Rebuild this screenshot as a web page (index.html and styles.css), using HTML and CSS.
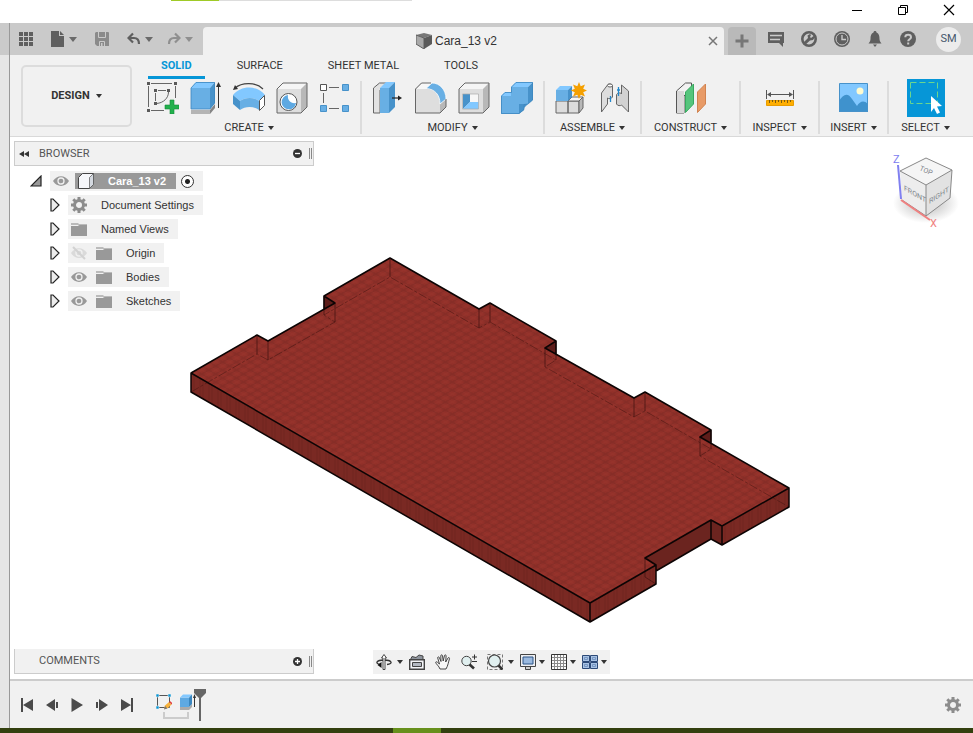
FILE: index.html
```html
<!DOCTYPE html>
<html lang="en">
<head>
	<meta charset="utf-8">
	<meta name="viewport" content="width=device-width, initial-scale=1">
	<title>Cara_13 v2</title>
	<link rel="stylesheet" href="styles.css">
</head>

<body>
	<header class="titlebar">
		<div class="progress"><span class="progress-done"></span></div>
		<button class="win-btn" aria-label="Minimize"><svg width="12" height="12" viewBox="0 0 12 12"><path d="M1 6.5h10" stroke="#000"/></svg></button>
		<button class="win-btn" aria-label="Restore"><svg width="12" height="12" viewBox="0 0 12 12" fill="none" stroke="#000"><path d="M1.5 3.5h7v7h-7zM3.5 3.500v-2h7v7h-2"/></svg></button>
		<button class="win-btn" aria-label="Close"><svg width="12" height="12" viewBox="0 0 12 12"><path d="M1 1l10 10M11 1l-10 10" stroke="#000" stroke-width="1.200"/></svg></button>
	</header>

	<div class="app">
		<div class="edge"></div>
		<main class="main">

			<!-- quick access + document tab -->
			<div class="docbar">
				<div class="quick">
					<button aria-label="Data panel"><svg width="14" height="14" viewBox="0 0 14 14" fill="#5f5f5f"><path d="M0 0h4v4H0zM5 0h4v4H5zM10 0h4v4h-4zM0 5h4v4H0zM5 5h4v4H5zM10 5h4v4h-4zM0 10h4v4H0zM5 10h4v4H5zM10 10h4v4h-4z"/></svg></button>
					<button aria-label="File"><svg width="14" height="16" viewBox="0 0 14 16" fill="#5f5f5f"><path d="M0 0h8v5h5v11H0zM9 0l4 4H9z"/></svg><i class="caret dim"></i></button>
					<button aria-label="Save"><svg width="14" height="14" viewBox="0 0 14 14"><path d="M1 0h12a1 1 0 011 1v13H2L0 12V1z" fill="#8a8a8a"/><path d="M3.500 0v5.500h7V0M4.500 14V9.500h5V14" fill="none" stroke="#cacaca"/><path d="M6 11h1.500v3H6z" fill="#cacaca"/></svg></button>
					<div class="history">
						<button aria-label="Undo"><svg width="14" height="14" viewBox="0 0 14 14" fill="none" stroke="#5f5f5f" stroke-width="2.200"><path d="M6 1.500L1.500 6 6 10.500M2 6h5c3.500 0 5 2 5 6"/></svg><i class="caret dim"></i></button>
						<button aria-label="Redo"><svg width="14" height="14" viewBox="0 0 14 14" fill="none" stroke="#8f8f8f" stroke-width="2.200"><path d="M8 1.500L12.500 6 8 10.500M12 6H7c-3.500 0-5 2-5 6"/></svg><i class="caret faint"></i></button>
					</div>
				</div>
				<div class="doctab">
					<span class="doctab-name"><svg width="16" height="16" viewBox="0 0 16 16"><path d="M0 2l8-2 8 2-8 3z" fill="#777"/><path d="M0 2l8 3v11l-8-5z" fill="#a9a9a9" stroke="#5f5f5f"/><path d="M8 5l8-3v9l-8 5z" fill="#5a5a5a"/></svg>Cara_13 v2</span>
					<button aria-label="Close tab"><svg width="10" height="10" viewBox="0 0 10 10"><path d="M1 1l8 8M9 1L1 9" stroke="#777" stroke-width="1.500"/></svg></button>
				</div>
				<button class="newtab" aria-label="New tab"><svg width="14" height="14" viewBox="0 0 14 14"><path d="M7 .5v13M.5 7h13" stroke="#777" stroke-width="3"/></svg></button>
				<div class="account">
					<button aria-label="Feedback"><svg width="16" height="16" viewBox="0 0 16 16"><path d="M0 1h16v11h-1v4l-4-4H0z" fill="#5f5f5f"/><path d="M2 4.500h12M2 8.500h10" stroke="#cacaca" stroke-width="1.300"/></svg></button>
					<button aria-label="Extensions"><svg width="16" height="16" viewBox="0 0 16 16"><circle cx="8" cy="8" r="6.700" fill="none" stroke="#5f5f5f" stroke-width="2.600"/><path d="M2 12l5-5-.5-2.500L9 3l1 1-1 2 1 1 2.500-2L14 6l-2 3-3 .5L4 14z" fill="#5f5f5f"/></svg></button>
					<button aria-label="Job status"><svg width="16" height="16" viewBox="0 0 16 16"><circle cx="8" cy="8" r="8" fill="#5f5f5f"/><circle cx="8" cy="8" r="6" fill="none" stroke="#cacaca"/><path d="M8 4v4.500h4" fill="none" stroke="#cacaca" stroke-width="1.400"/></svg></button>
					<button aria-label="Notifications"><svg width="16" height="16" viewBox="0 0 16 16" fill="#5f5f5f"><path d="M8 0c1 0 1.500.7 1.500 1.500C12 2.500 12.500 5 12.500 8c0 2 1 3 2 4.500h-13c1-1.500 2-2.500 2-4.500 0-3 .5-5.500 3-6.500C6.500.7 7 0 8 0zM6 13.500h4L8 16z"/></svg></button>
					<button aria-label="Help"><svg width="16" height="16" viewBox="0 0 16 16"><circle cx="8" cy="8" r="8" fill="#5f5f5f"/><path d="M5.300 6.300C5.300 3 11 3 11 6.300c0 2-2.800 2-2.800 4" fill="none" stroke="#cacaca" stroke-width="2"/><path d="M7.200 11.500h2v2h-2z" fill="#cacaca"/></svg></button>
					<button class="avatar">SM</button>
				</div>
			</div>

			<!-- ribbon -->
			<div class="ribbon">
				<button class="workspace">DESIGN<i class="caret"></i></button>
				<div class="ribbon-body">
					<nav class="tabs">
						<a href="#solid" class="tab active">SOLID</a>
						<a href="#surface" class="tab">SURFACE</a>
						<a href="#sheet" class="tab">SHEET METAL</a>
						<a href="#tools" class="tab">TOOLS</a>
					</nav>
					<div class="groups">
						<section class="group create">
							<div class="tools">
								<button aria-label="Create sketch"><svg width="32" height="32" viewBox="0 0 32 32"><path d="M4 1.500h21M1.500 4v21M28.500 4v12M4 28.500h13M11 8.500h8M8.500 11v8" stroke="#666"/><path d="M21.500 10c0 6-5 11-12 11.500" fill="none" stroke="#666"/><path d="M0 0h3v3H0zM27 0h3v3h-3zM0 27h3v3H0zM7 7h3v3H7zM20 7h3v3h-3zM7 20h3v3H7z" fill="#5a5a5a"/><path d="M23 18h4v5h5v4h-5v5h-4v-5h-5v-4h5z" fill="#22b14c" stroke="#168c39" stroke-width=".6"/></svg></button>
								<button aria-label="Extrude"><svg width="32" height="32" viewBox="0 0 32 32"><path d="M1 28h19v4H1z" fill="#b5b5b5"/><path d="M20 28l5-6v4l-5 6z" fill="#858585"/><path d="M1 6h19v21H1z" fill="#68afe4"/><path d="M1 6l5-6h19l-5 6z" fill="#82c8ff"/><path d="M20 6l5-6v21l-5 6z" fill="#4792ca"/><path d="M1 27V6l5-5.500h18.500V21L20 27z" fill="none" stroke="#3c87bf" stroke-width=".8"/><path d="M28.500 4v22" stroke="#333"/><path d="M28.500 0l2.500 5h-5z" fill="#333"/></svg></button>
								<button aria-label="Revolve"><svg width="32" height="32" viewBox="0 0 32 32"><path d="M2 6c7-6 21-6 28 1" fill="none" stroke="#444" stroke-width="1.200"/><path d="M0 8l2-5 3 4z" fill="#333"/><path d="M0 13c8-10 24-10 32 0l-6 6c-5-4-14-4-19 0z" fill="#82c8ff"/><path d="M0 13l7 6v9l-7-6z" fill="#4792ca"/><path d="M7 19c5-4 14-4 19 0v9c-5-4-14-4-19 0z" fill="#68afe4"/><path d="M26.500 18.500l5-5v10l-5 5z" fill="#fff" stroke="#555"/></svg></button>
								<button aria-label="Hole"><svg width="32" height="32" viewBox="0 0 32 32"><path d="M1 7h24v24H1z" fill="#dedede"/><path d="M1 7l6-6h24l-6 6z" fill="#f5f5f5"/><path d="M25 7l6-6v24l-6 6z" fill="#b8b8b8"/><path d="M1 31V7l6-6h24v24l-6 6z" fill="none" stroke="#666"/><circle cx="12.500" cy="20" r="8.500" fill="#fff" stroke="#555"/><path d="M12 13a7.200 7.200 0 108 8c-5 1-9-3-8-8z" fill="#5ea9e2"/></svg></button>
								<button aria-label="Rectangular pattern"><svg width="32" height="32" viewBox="0 0 32 32"><path d="M10 5.500h10M4.500 11v10M10 26.500h10" stroke="#666"/><path d="M1.500 2.500h6v6h-6z" fill="#fff" stroke="#555"/><path d="M23.500 2.500h6v6h-6zM1.500 23.500h6v6h-6zM23.500 23.500h6v6h-6z" fill="#68afe4" stroke="#4792ca"/></svg></button>
							</div>
							<button class="group-label">CREATE<i class="caret"></i></button>
						</section>
						<section class="group modify">
							<div class="tools">
								<button aria-label="Press pull"><svg width="32" height="32" viewBox="0 0 32 32"><path d="M1.500 31V6l6-5H15L8 8v23z" fill="#e2e2e2" stroke="#666"/><path d="M8 6h9v25H8z" fill="#68afe4"/><path d="M8 6l6-6h9l-6 6z" fill="#82c8ff"/><path d="M17 6l6-6v25l-6 6z" fill="#4792ca"/><path d="M20 16h7" stroke="#222" stroke-width="1.200"/><path d="M30 16l-4-2.500v5z" fill="#222"/></svg></button>
								<button aria-label="Fillet"><svg width="32" height="32" viewBox="0 0 32 32"><path d="M.5 31V7l6-6H16c9 0 15 7 15 16v8l-6 6z" fill="#b8b8b8"/><path d="M.5 31V7H10c9 0 15 5 15 14v10z" fill="#dedede"/><path d="M1 7l6-6h10l-6 6z" fill="#f7f7f7"/><path d="M11 6.500L17 1c8 0 14 7 14 16l-6 5c0-9-5-15-14-15.500z" fill="#68afe4" stroke="#fff" stroke-width=".8"/><path d="M16 1H6.500l-6 6v24H25l6-6v-8" fill="none" stroke="#666"/></svg></button>
								<button aria-label="Shell"><svg width="32" height="32" viewBox="0 0 32 32"><path d="M1 7h24v24H1z" fill="#dedede"/><path d="M1 7l6-6h24l-6 6z" fill="#f5f5f5"/><path d="M25 7l6-6v24l-6 6z" fill="#b8b8b8"/><path d="M1 31V7l6-6h24v24l-6 6z" fill="none" stroke="#666"/><path d="M4.500 12h16v15h-16z" fill="#f7f7f7"/><path d="M5 12h7v8l-7 7z" fill="#4792ca"/><path d="M12 20h8.500v7H5z" fill="#82c8ff"/><path d="M4.500 12h16v15h-16z" fill="none" stroke="#aaa" stroke-width=".7"/></svg></button>
								<button aria-label="Combine"><svg width="32" height="32" viewBox="0 0 32 32"><path d="M0 14h10V5h17v17h-9v10H0z" fill="#68afe4"/><path d="M0 14l4-4h6v4zM10 5l5-5h17l-5 5z" fill="#82c8ff"/><path d="M27 5l5-5v18l-5 4zM18 22h9l-4 4v2l-5 4z" fill="#4792ca"/><path d="M.5 31.500V14L4 10.500h6.500V5l4.500-4.500h16.500V18L27 22l-4 .5v5l-5 4z" fill="none" stroke="#3c87bf" stroke-width=".8"/></svg></button>
							</div>
							<button class="group-label">MODIFY<i class="caret"></i></button>
						</section>
						<section class="group assemble">
							<div class="tools">
								<button aria-label="New component"><svg width="32" height="32" viewBox="0 0 32 32"><path d="M1 19h12v12H1zM13 19h11v12H13z" fill="#ddd" stroke="#666"/><path d="M13 19l4-4h11l-4 4z" fill="#f7f7f7" stroke="#666"/><path d="M24 19l4-4v11l-4 5z" fill="#b8b8b8" stroke="#666"/><path d="M1 8h12v11H1z" fill="#68afe4"/><path d="M1 8l4-4h12l-4 4z" fill="#82c8ff"/><path d="M13 8l4-4v11l-4 4z" fill="#4792ca"/><path d="M24 0l1.700 4.300L30 2.500l-1.800 4.200 4 1.800-4 1.800 1.800 4.200-4.300-1.800L24 17l-1.700-4.300-4.300 1.800 1.800-4.200-4-1.800 4-1.800L18 2.500l4.300 1.800z" fill="#f5a000"/></svg></button>
								<button aria-label="Joint"><svg width="32" height="32" viewBox="0 0 32 32" stroke="#666"><path d="M3.500 30V11l6-8c1-2 5-1 5 1v11c-1 2-4 2-5 1v6z" fill="#ddd"/><path d="M30.500 30V9l-7-6v9c-1-2-5-1-5 1v9c1 2 4 2 5 1z" fill="#d2d2d2"/><ellipse cx="12" cy="3.500" rx="2.500" ry="1.500" fill="#fff"/><path d="M12.500 14v6M20.500 5v9M19 8h3" stroke="#2288cc" stroke-width="1.300"/></svg></button>
							</div>
							<button class="group-label">ASSEMBLE<i class="caret"></i></button>
						</section>
						<section class="group construct">
							<div class="tools">
								<button aria-label="Offset plane"><svg width="32" height="32" viewBox="0 0 32 32"><path d="M1.500 31V9l9-8h6v5L9 14v17z" fill="#f2f2f2" stroke="#555"/><path d="M2 9h7v22H2z" fill="#d8d8d8"/><path d="M10.500 10L18.500 2v20l-8 8.500z" fill="#55c57c" stroke="#37a95f"/><path d="M22.500 10L30.500 2v20l-8 8.500z" fill="#e89b67" stroke="#d18350"/></svg></button>
							</div>
							<button class="group-label">CONSTRUCT<i class="caret"></i></button>
						</section>
						<section class="group inspect">
							<div class="tools">
								<button aria-label="Measure"><svg width="32" height="32" viewBox="0 0 32 32"><path d="M2.500 8v9M29.500 8v9M4 12.500h24" stroke="#555"/><path d="M3 12.500l4-2.500v5zM29 12.500l-4-2.500v5z" fill="#555"/><path d="M2.500 18.500h27v5h-27z" fill="#ffae00" stroke="#e89c00"/><path d="M5.500 18v3M8.500 18v2M11.500 18v3M14.500 18v2M17.500 18v3M20.500 18v2M23.500 18v3M26.500 18v2" stroke="#7a5a10"/></svg></button>
							</div>
							<button class="group-label">INSPECT<i class="caret"></i></button>
						</section>
						<section class="group insert">
							<div class="tools">
								<button aria-label="Insert image"><svg width="32" height="32" viewBox="0 0 32 32"><path d="M1.500 1.500h28v28h-28z" fill="#82c8ff"/><path d="M1 19c4-7 9-9 13-2l5 7c3-5 7-6 11-2v8H1z" fill="#3f92cd"/><path d="M1.500 1.500h28v28h-28z" fill="none" stroke="#4792ca"/><circle cx="22" cy="9" r="3.500" fill="#fffbd0"/></svg></button>
							</div>
							<button class="group-label">INSERT<i class="caret"></i></button>
						</section>
						<section class="group select">
							<div class="tools">
								<button aria-label="Select"><svg width="38" height="38" viewBox="0 0 38 38"><path d="M0 0h38v38H0z" fill="#0696d7"/><path d="M3.500 3.500h27v21h-27z" fill="none" stroke="#6cd68d" stroke-dasharray="6 3"/><path d="M24 17l11 10-5 .5 3 6-3 1.500-3-6-3 4z" fill="#fff"/></svg></button>
							</div>
							<button class="group-label">SELECT<i class="caret"></i></button>
						</section>
					</div>
				</div>
			</div>

			<!-- modelling canvas -->
			<div class="canvas">
				<svg class="model" viewBox="10 137 963 542" role="img" aria-label="Cara_13 body">
					<defs>
						<pattern id="weave" width="8" height="8" patternUnits="userSpaceOnUse" patternTransform="matrix(.87 .5 -.87 .5 0 0)">
							<rect width="8" height="8" fill="#923029"/>
							<path d="M0 2h8M2 0v8" stroke="#7a2a23" stroke-width="2" opacity=".45"/>
							<path d="M0 6h8M6 0v8" stroke="#a0382f" opacity=".4"/>
						</pattern>
						<pattern id="rib" width="9" height="9" patternUnits="userSpaceOnUse">
							<rect width="9" height="9" fill="#7a2923"/>
							<path d="M2 0v9M5 0v9" stroke="#662019" opacity=".5"/>
						</pattern>
					</defs>
					<!-- side walls -->
					<path d="M191 373L590 603V622L191 392z" fill="url(#rib)"/>
					<path d="M590 603L656 565V584L590 622zM722 526L789 488V507L722 545z" fill="url(#rib)"/>
					<path d="M645 558L711 520V539L656 571V565zM711 520L722 526V545L711 539z" fill="#6b241f"/>
					<path d="M324 296L335 303 324 310zM556 341V354L545 348zM711 430V443L700 437z" fill="#5e1d1a"/>
					<!-- top face -->
					<path d="M191 373L257 335 268 341 335 303 324 296 390 258 479 309 490 303 556 341 545 348 634 398 645 392 711 430 700 437 789 488 722 526 711 520 645 558 656 565 590 603z" fill="url(#weave)"/>
					<!-- hidden edges -->
					<path d="M191 392L257 354 268 360 335 322 324 315 390 277 479 328 490 322 556 360 545 367 634 417 645 411 711 449 700 456 789 507" fill="none" stroke="#481512" stroke-width=".8" stroke-dasharray="9 2 3 2" opacity=".7"/>
					<path d="M257 335v19M268 341v19M335 303v19M324 296v19M390 258v19M479 309v19M490 303v19M556 341v19M545 348v19M634 398v19M645 392v19M711 430v19M700 437v19M645 558v19l11 7" fill="none" stroke="#481512" stroke-width=".8"/>
					<!-- visible edges -->
					<path d="M191 373L257 335 268 341 335 303 324 296 390 258 479 309 490 303 556 341 545 348 634 398 645 392 711 430 700 437 789 488 722 526 711 520 645 558 656 565 590 603zM191 373V392L590 622 656 584V565M590 603V622M656 571L711 539 722 545 789 507V488M722 526V545M711 520V539M324 296V310M556 341V354M711 430V443" fill="none" stroke="#0c0404" stroke-width="1.500" stroke-linejoin="round"/>
				</svg>

				<svg class="viewcube" width="80" height="90" viewBox="885 145 80 90" role="img" aria-label="View cube">
					<defs>
						<radialGradient id="shade"><stop offset=".3" stop-color="#999" stop-opacity=".5"/><stop offset="1" stop-color="#999" stop-opacity="0"/></radialGradient>
					</defs>
					<ellipse cx="926" cy="203" rx="33" ry="20" fill="url(#shade)"/>
					<path d="M900 171L926 158 952 170 926 185z" fill="#f5f5f5"/>
					<path d="M900 171L926 185V216L902 200z" fill="#ededed"/>
					<path d="M926 185L952 170 950 198 926 216z" fill="#e2e2e2"/>
					<path d="M900 171L926 158 952 170 926 185zM926 185V216M902 200L926 216 950 198 952 170" fill="none" stroke="#888"/>
					<path d="M898 165L901 199" stroke="#8080f0" stroke-width="2"/>
					<path d="M901 200L930 220" stroke="#f08080" stroke-width="2"/>
					<text class="axis" x="893" y="163" fill="#8080f0">Z</text>
					<text class="axis" x="930" y="227" fill="#f08080">X</text>
					<text class="face" transform="translate(919 170) rotate(24)">TOP</text>
					<text class="face" transform="translate(904 190) skewY(30)">FRONT</text>
					<text class="face" transform="translate(929 204) skewY(-33)">RIGHT</text>
				</svg>

				<div class="browser">
					<div class="panel">
						<button aria-label="Collapse"><svg width="10" height="6" viewBox="0 0 10 6" fill="#333"><path d="M5 0v6L0 3zM10 0v6L5 3z"/></svg></button>
						<span class="panel-title">BROWSER</span>
						<button aria-label="Hide all"><svg width="9" height="9" viewBox="0 0 9 9"><circle cx="4.500" cy="4.500" r="4.500" fill="#333"/><path d="M2 4.500h5" stroke="#fff" stroke-width="1.300"/></svg></button>
						<i class="grip"></i>
					</div>
					<ul class="tree">
						<li class="root">
							<button aria-label="Collapse Cara_13 v2"><svg width="12" height="12" viewBox="0 0 12 12"><path d="M11 1v10H1z" fill="#999" stroke="#222" stroke-width="1.200"/></svg></button>
							<div class="node">
								<svg class="icon" width="16" height="16" viewBox="0 0 16 16"><use href="#eye"/></svg>
								<span class="node-name"><svg width="16" height="16" viewBox="0 0 16 16"><path d="M.5 15.500v-11l4-4h11v11l-4 4z" fill="#f6f7fa" stroke="#444"/><path d="M11.500 4.500l4-4v11l-4 4z" fill="#d4d9e0" stroke="#555" stroke-width=".7"/></svg>Cara_13 v2</span>
								<input type="radio" class="activate" aria-label="Activate Cara_13 v2" checked>
							</div>
						</li>
						<li>
							<button aria-label="Expand Document Settings"><svg width="10" height="14" viewBox="0 0 10 14"><use href="#expand"/></svg></button>
							<div class="node"><svg class="icon" width="16" height="16" viewBox="0 0 16 16"><use href="#gear"/></svg><span>Document Settings</span></div>
						</li>
						<li>
							<button aria-label="Expand Named Views"><svg width="10" height="14" viewBox="0 0 10 14"><use href="#expand"/></svg></button>
							<div class="node"><svg class="icon" width="16" height="16" viewBox="0 0 16 16"><use href="#folder"/></svg><span>Named Views</span></div>
						</li>
						<li>
							<button aria-label="Expand Origin"><svg width="10" height="14" viewBox="0 0 10 14"><use href="#expand"/></svg></button>
							<div class="node"><svg class="icon" width="16" height="16" viewBox="0 0 16 16" opacity=".25"><use href="#eye"/><path d="M2 2l12 12" stroke="#777" stroke-width="2"/></svg><svg class="icon" width="16" height="16" viewBox="0 0 16 16"><use href="#folder"/></svg><span>Origin</span></div>
						</li>
						<li>
							<button aria-label="Expand Bodies"><svg width="10" height="14" viewBox="0 0 10 14"><use href="#expand"/></svg></button>
							<div class="node"><svg class="icon" width="16" height="16" viewBox="0 0 16 16"><use href="#eye"/></svg><svg class="icon" width="16" height="16" viewBox="0 0 16 16"><use href="#folder"/></svg><span>Bodies</span></div>
						</li>
						<li>
							<button aria-label="Expand Sketches"><svg width="10" height="14" viewBox="0 0 10 14"><use href="#expand"/></svg></button>
							<div class="node"><svg class="icon" width="16" height="16" viewBox="0 0 16 16"><use href="#eye"/></svg><svg class="icon" width="16" height="16" viewBox="0 0 16 16"><use href="#folder"/></svg><span>Sketches</span></div>
						</li>
					</ul>
				</div>

				<div class="canvas-foot">
					<div class="panel comments">
						<span class="panel-title">COMMENTS</span>
						<button aria-label="Add comment"><svg width="9" height="9" viewBox="0 0 9 9"><circle cx="4.500" cy="4.500" r="4.500" fill="#333"/><path d="M2 4.500h5M4.500 2v5" stroke="#fff" stroke-width="1.300"/></svg></button>
						<i class="grip"></i>
					</div>
					<div class="navbar">
						<button class="wide" aria-label="Orbit"><svg width="16" height="16" viewBox="0 0 16 16" fill="none" stroke="#333"><path d="M4 10.500C-1 9.500 0 6 8 6s9.500 4 3 4.500" stroke-width="1.300"/><path d="M7 15.500V4H5.500L8 .5 10.500 4H9v11.500z" fill="#fff" stroke-width=".9"/><path d="M1.500 11l4-3v6z" fill="#111" stroke="none"/></svg><i class="caret"></i></button>
						<button class="single" aria-label="Look at"><svg width="16" height="16" viewBox="0 0 16 16" fill="#f4f5f8" stroke="#444"><path d="M1.500 5.500L3 2.500l4 1 3-2.500 4 1v3.500" fill="#8d939c"/><path d="M.7 5.700h14.600v9.600H.7z" stroke-width="1.400"/><path d="M3.500 8.500h9v4h-9z" fill="#b4b9c2"/></svg></button>
						<button class="single" aria-label="Pan"><svg width="16" height="16" viewBox="0 0 16 16"><path d="M5 15C4 12 1 10 .7 8.500c0-1 1.300-1 2 0L4.500 10 2.700 4c-.3-1.200 1.200-1.600 1.600-.5L6 7.500 5.800 1.800c0-1.300 1.600-1.300 1.700 0L8.200 7 9.500 1.500c.3-1 1.700-.8 1.600.4L10.700 8l2.300-4c.6-1 1.900-.3 1.500.7-1 3-1.500 7-3.500 10.300z" fill="#f7f7f7" stroke="#333" stroke-width=".9"/></svg></button>
						<button class="single" aria-label="Zoom"><svg width="16" height="16" viewBox="0 0 16 16"><path d="M8 10l5 4.500" stroke="#333" stroke-width="2.600"/><circle cx="5.500" cy="7" r="4.700" fill="#e0efef" stroke="#444"/><path d="M11 3h5M13.500 .5v5M11 7.500h5" stroke="#333"/></svg></button>
						<button class="wide" aria-label="Zoom window"><svg width="16" height="16" viewBox="0 0 16 16"><path d="M.5.5h15v15H.5z" fill="none" stroke="#777" stroke-dasharray="3 2"/><path d="M11 11l4.500 4.500" stroke="#333" stroke-width="2.600"/><circle cx="7.500" cy="7" r="6" fill="#e0efef" stroke="#444" stroke-width="1.200"/></svg><i class="caret"></i></button>
						<button aria-label="Display settings"><svg width="16" height="16" viewBox="0 0 16 16"><path d="M5.500 12.500h5v3h-5z" fill="#ccc" stroke="#444"/><path d="M.5.500h15v12H.5z" fill="#eceef2" stroke="#444"/><path d="M3 3h10v7H3z" fill="#9ab9df" stroke="#2c5487"/></svg><i class="caret"></i></button>
						<button aria-label="Grid and snaps"><svg width="16" height="16" viewBox="0 0 16 16"><path d="M.5.5h15v15H.5z" fill="#fafafa" stroke="#333"/><path d="M3.500 1v14M6.500 1v14M9.500 1v14M12.500 1v14M1 3.500h14M1 6.500h14M1 9.500h14M1 12.500h14" stroke="#888"/></svg><i class="caret"></i></button>
						<button aria-label="Viewports"><svg width="16" height="16" viewBox="0 0 16 16"><path d="M.5 1.500h7v6h-7zM8.500 1.500h7v6h-7zM.5 8.500h7v6h-7zM8.500 8.500h7v6h-7z" fill="#a9c3e4" stroke="#2d4a78"/><path d="M2.500 3.500h3v2h-3zM10.500 3.500h3v2h-3zM2.500 10.500h3v2h-3zM10.500 10.500h3v2h-3z" fill="#a9c3e4" stroke="#6284b5" stroke-width=".7"/></svg><i class="caret"></i></button>
					</div>
				</div>
			</div>

			<!-- timeline -->
			<footer class="timeline">
				<div class="playback">
					<button aria-label="To start"><svg width="14" height="14" viewBox="0 0 14 14" fill="#4a4a4a"><path d="M1 0h2v14H1zM13 1v12L3 7z"/></svg></button>
					<button aria-label="Step back"><svg width="14" height="14" viewBox="0 0 14 14" fill="#4a4a4a"><path d="M10 1v12L1 7zM11 4h2v6h-2z"/></svg></button>
					<button aria-label="Play"><svg width="14" height="14" viewBox="0 0 14 14" fill="#4a4a4a"><path d="M1.500 0v14L13 7z"/></svg></button>
					<button aria-label="Step forward"><svg width="14" height="14" viewBox="0 0 14 14" fill="#4a4a4a"><path d="M4 1v12l9-6zM1 4h2v6H1z"/></svg></button>
					<button aria-label="To end"><svg width="14" height="14" viewBox="0 0 14 14" fill="#4a4a4a"><path d="M11 0h2v14h-2zM1 1v12l10-6z"/></svg></button>
				</div>
				<div class="features">
					<button aria-label="Sketch1"><svg width="16" height="16" viewBox="0 0 16 16"><path d="M1.500 1.500h12v12h-12z" fill="none" stroke="#555"/><path d="M0 0h3v3H0zM12 0h3v3h-3zM0 12h3v3H0z" fill="#0696d7" stroke="#f1f1f1" stroke-width=".6"/><path d="M8 15l1-3.500L13 8l2.500 2.500L12 14z" fill="#f7b23c"/><path d="M13 8l1-1 3 2.500-1.500 1z" fill="#e04040"/><path d="M8 15.500l1-3.500 2.500 2.500z" fill="#777"/></svg></button>
					<button aria-label="Extrude1"><svg width="16" height="16" viewBox="0 0 16 16"><path d="M0 13h9l3-3v3l-3 3H0z" fill="#aaa"/><path d="M0 3.500h9V13H0z" fill="#5ea9e2"/><path d="M0 3.500L3 .5h9l-3 3z" fill="#82c8ff"/><path d="M9 3.500l3-3V10l-3 3z" fill="#3a86bf"/><path d="M14.500 3v10" stroke="#333"/><path d="M14.500 0l1.500 4h-3z" fill="#333"/></svg></button>
					<i class="bracket"></i>
				</div>
				<svg class="marker" width="12" height="32" viewBox="0 0 12 32" fill="#666"><path d="M0 0h12v4L7 9v23H5V9L0 4z"/></svg>
				<button class="settings" aria-label="Timeline settings"><svg width="16" height="16" viewBox="0 0 16 16"><use href="#gear"/></svg></button>
			</footer>
		</main>
	</div>
	<div class="taskbar"><span class="taskbar-item"></span></div>

	<!-- shared symbols -->
	<svg class="symbols" width="0" height="0">
		<symbol id="eye" viewBox="0 0 16 16"><path d="M0 8c4-6.500 12-6.500 16 0-4 6.500-12 6.500-16 0z" fill="#999"/><circle cx="8" cy="8" r="3" fill="#999" stroke="#f1f1f1" stroke-width="1.300"/></symbol>
		<symbol id="folder" viewBox="0 0 16 16"><path d="M0 2h7l1 1h8v2H8L7 4H0z" fill="#bbb"/><path d="M0 5h7l2-1h7v11H0z" fill="#999"/></symbol>
		<symbol id="gear" viewBox="0 0 16 16"><circle cx="8" cy="8" r="4.500" fill="none" stroke="#8c8c8c" stroke-width="3"/><path d="M8 0v3M8 13v3M0 8h3M13 8h3M2.300 2.300l2.200 2.200M11.500 11.500l2.200 2.200M2.300 13.700l2.200-2.200M11.500 4.500l2.200-2.200" stroke="#8c8c8c" stroke-width="3"/></symbol>
		<symbol id="expand" viewBox="0 0 10 14"><path d="M1 1h2l6 6-6 6H1z" fill="#ececec" stroke="#222" stroke-width="1.200"/></symbol>
	</svg>
</body>
</html>
```
FILE: styles.css
```css
* {
	box-sizing: border-box;}
body {
	margin: 0;
	height: 100vh;
	display: flex;
	flex-direction: column;
	overflow: hidden;
	background: #fff;
	color: #333;
	font-family: Roboto, "Liberation Sans", sans-serif;
	font-size: 11px;
	line-height: 14px;}
button {
	display: flex;
	align-items: center;
	justify-content: center;
	padding: 0;
	border: 0;
	background: none;
	color: inherit;
	font: inherit;
	cursor: pointer;}
svg {
	display: block;
	flex: none;}
.symbols {
	position: absolute;}
.caret {
	flex: none;
	border: solid transparent;
	border-width: 4px 3px 0;
	border-top-color: #333;}
.caret.dim {
	border-width: 5px 4px 0;
	border-top-color: #6a6a6a;
	margin-left: 4px;}
.caret.faint {
	border-width: 5px 4px 0;
	border-top-color: #8f8f8f;
	margin-left: 4px;}

/* window title strip */
.titlebar {
	flex: none;
	height: 23px;
	display: flex;
	justify-content: flex-end;
	gap: 34px;
	padding: 0 18px 3px 171px;}
.progress {
	width: 241px;
	height: 1px;
	margin-right: auto;
	background: #ddd;}
.progress-done {
	display: block;
	width: 20%;
	height: 1px;
	background: #9fca27;}

.app {
	flex: 1;
	min-height: 0;
	display: flex;}
.edge {
	flex: none;
	width: 10px;
	border-right: 1px solid #999;
	background: linear-gradient(#cacaca 32px, #e6e6e6 32px);}
.main {
	flex: 1;
	min-width: 0;
	display: flex;
	flex-direction: column;}

/* document bar */
.docbar {
	flex: none;
	height: 32px;
	display: flex;
	background: #cacaca;}
.quick {
	flex: none;
	width: 193px;
	display: flex;
	gap: 18px;
	padding-left: 9px;}
.history {
	display: flex;
	gap: 14px;}
.doctab {
	flex: 1;
	display: flex;
	align-items: center;
	margin-top: 4px;
	padding-right: 6px;
	border-radius: 4px 4px 0 0;
	background: #f1f1f1;}
.doctab-name {
	flex: 1;
	display: flex;
	justify-content: center;
	align-items: center;
	gap: 3px;
	padding-left: 2px;
	font-family: "Liberation Sans", sans-serif;
	font-size: 12px;}
.newtab {
	width: 28px;
	margin: 4px 0 0 4px;
	border-radius: 4px 4px 0 0;
	background: #b9b9b9;}
.account {
	display: flex;
	align-items: center;
	gap: 17px;
	padding: 0 12px;}
.avatar {
	width: 25px;
	height: 25px;
	margin-left: 3px;
	border-radius: 50%;
	background: #ececec;
	color: #44566b;}

/* ribbon */
.ribbon {
	flex: none;
	display: flex;
	padding-left: 11px;
	border-bottom: 1px solid #d9d9d9;
	background: #f1f1f1;}
.workspace {
	flex: none;
	width: 111px;
	height: 62px;
	margin: 10px 4px 9px 0;
	gap: 6px;
	border: 2px solid #dcdcdc;
	border-radius: 5px;
	font-weight: bold;}
.ribbon-body {
	flex: 1;}
.tabs {
	display: flex;
	gap: 19px;
	padding-left: 12px;}
.tab {
	height: 24px;
	padding: 4px 13px 0;
	border-bottom: 3px solid transparent;
	color: #333;
	text-decoration: none;}
.tab.active {
	border-bottom-color: #0696d7;
	color: #0696d7;
	font-weight: bold;}
.groups {
	display: flex;}
.group {
	display: flex;
	flex-direction: column;
	align-items: center;
	border: solid;
	border-width: 0 2px 0 0;
	border-image: linear-gradient(transparent 3px, #dcdcdc 3px, #dcdcdc 54px, transparent 54px) 1;}
.tools {
	height: 38px;
	display: flex;}
.tools button {
	width: 43px;}
.group-label {
	height: 19px;
	padding-top: 2px;
	gap: 4px;}
.create {
	width: 226px;
	padding-left: 2px;}
.modify {
	width: 183px;}
.assemble {
	width: 97px;}
.construct {
	width: 99px;}
.inspect {
	width: 79px;}
.insert {
	width: 69px;}
.select {
	width: 73px;
	border: 0;}

/* canvas */
.canvas {
	position: relative;
	flex: 1;
	min-height: 0;
	display: flex;
	flex-direction: column;
	justify-content: space-between;
	padding: 4px 4px 5px;}
.model {
	position: absolute;
	inset: 0;
	width: 100%;
	height: 100%;}
.viewcube {
	position: absolute;
	top: 8px;
	right: 8px;}
.face {
	font-size: 7px;
	fill: #7d8289;}
.axis {
	font-size: 11px;}
.browser {
	position: relative;
	width: 300px;}
.panel {
	height: 25px;
	display: flex;
	align-items: center;
	padding: 0 1px 0 4px;
	border: 1px solid #ccc;
	background: #f1f1f1;
	color: #555;}
.panel-title {
	flex: 1;
	padding-left: 10px;}
.grip {
	width: 3px;
	height: 11px;
	margin-left: 7px;
	border: solid #888;
	border-width: 0 1px;}
.comments {
	width: 300px;
	border-top: 0;}
.comments .panel-title {
	padding-left: 20px;}

.tree {
	display: flex;
	flex-direction: column;
	gap: 4px;
	margin: 5px 0 0;
	padding: 0;
	list-style: none;
	font-family: "Liberation Sans", sans-serif;}
.tree li {
	display: flex;
	align-items: center;
	gap: 8px;
	padding-left: 36px;}
.tree .root {
	padding-left: 16px;}
.node {
	height: 20px;
	display: flex;
	align-items: center;
	gap: 9px;
	padding: 0 9px 0 3px;
	background: #f1f1f1;}
.node span {
	padding-left: 5px;}
.root .node {
	gap: 6px;}
.root .node .node-name {
	height: 16px;
	display: flex;
	align-items: center;
	gap: 14px;
	padding: 0 10px 0 3px;
	background: #999;
	color: #fff;
	font-weight: bold;}
.activate {
	appearance: none;
	width: 13px;
	height: 13px;
	margin: 0 0 0 -1px;
	border: 1px solid #333;
	border-radius: 50%;
	background: radial-gradient(#222 2px, #fff 3px);}

.canvas-foot {
	position: relative;
	display: grid;
	grid-template-columns: 1fr auto 1fr;
	align-items: end;}
.navbar {
	height: 24px;
	display: flex;
	gap: 6px;
	padding: 0 3px;
	background: #f1f1f1;}
.navbar button {
	gap: 3px;}
.navbar .wide {
	gap: 5px;}
.navbar .single {
	padding-right: 4px;}

/* timeline */
.timeline {
	flex: none;
	height: 49px;
	display: flex;
	align-items: center;
	padding: 0 12px 0 10px;
	border-top: 2px solid #ccc;
	background: #f1f1f1;}
.playback {
	display: flex;
	gap: 11px;}
.features {
	display: grid;
	grid-template-columns: 16px 16px;
	column-gap: 8px;
	row-gap: 2px;
	margin: 4px 0 0 22px;}
.bracket {
	grid-column: span 2;
	height: 7px;
	margin: 0 7px;
	border: solid #ccc;
	border-width: 0 2px 2px;}
.marker {
	margin-left: -2px;}
.settings {
	margin-left: auto;}

.taskbar {
	flex: none;
	height: 5px;
	padding-left: 393px;
	background: #33400f;}
.taskbar-item {
	display: block;
	width: 48px;
	height: 5px;
	background: #67901c;}
```
